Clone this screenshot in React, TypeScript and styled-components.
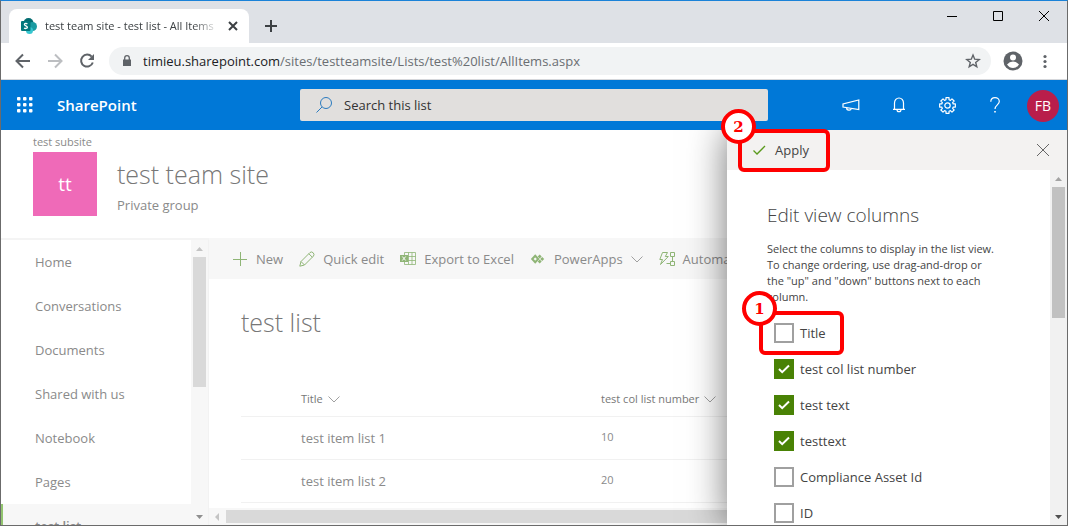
import React, { useState } from 'react';
import styled, { createGlobalStyle, css } from 'styled-components';

const GlobalStyle = createGlobalStyle`
  * { box-sizing: border-box; }
  body { margin: 0; font-family: "Open Sans", "Noto Sans", sans-serif; font-size: 13px; line-height: 20px; color: #333; }
  button { font: inherit; color: inherit; background: none; border: 0; padding: 0; cursor: pointer; }
  a { color: inherit; text-decoration: none; }
  svg { display: block; flex: none; }
`;

const Window = styled.div`
  display: flex;
  flex-direction: column;
  height: 100vh;
  overflow: hidden;
  background: #fff;
  border: 1px solid #6b6b6b;
  border-top-color: #1a82d8;
`;

/* Browser frame */
const TabStrip = styled.div`
  display: flex;
  align-items: flex-start;
  justify-content: space-between;
  flex: none;
  height: 42px;
  background: #dee1e6;
`;
const Tabs = styled.div`
  display: flex;
  align-items: flex-end;
  height: 42px;
  padding-left: 8px;
`;
const Tab = styled.div`
  display: flex;
  align-items: center;
  gap: 8px;
  width: 240px;
  height: 34px;
  padding: 0 10px 0 12px;
  background: #fff;
  border-radius: 8px 8px 0 0;
`;
const TabTitle = styled.span`
  flex: 1;
  overflow: hidden;
  white-space: nowrap;
  font-size: 11px;
  color: #3c4043;
  mask-image: linear-gradient(to right, #000 85%, transparent);
`;
const IconButton = styled.button<{ $w: number; $h: number; $color?: string }>`
  display: flex;
  align-items: center;
  justify-content: center;
  flex: none;
  width: ${p => p.$w}px;
  height: ${p => p.$h}px;
  color: ${p => p.$color ?? '#3c4043'};
`;
const WindowControls = styled.div`
  display: flex;
`;
const AddressBar = styled.div`
  display: flex;
  align-items: center;
  flex: none;
  height: 37px;
  padding: 0 6px;
  border-bottom: 1px solid #d5d7db;
`;
const UrlBox = styled.div`
  display: flex;
  align-items: center;
  gap: 12px;
  flex: 1;
  height: 28px;
  margin: 0 6px;
  padding: 0 2px 0 14px;
  background: #f1f3f4;
  border-radius: 14px;
`;
const Url = styled.a`
  flex: 1;
  overflow: hidden;
  white-space: nowrap;
  font-size: 13px;
  color: #6a6e72;
  b { font-weight: 400; color: #202124; }
`;

/* Suite bar */
const SuiteBar = styled.header`
  display: grid;
  grid-template-columns: 1fr minmax(0, 468px) 1fr;
  align-items: center;
  flex: none;
  height: 50px;
  background: #0078d7;
  color: #fff;
`;
const Brand = styled.div`
  display: flex;
  align-items: center;
  gap: 8px;
`;
const BrandName = styled.a`
  font-size: 15px;
  font-weight: 600;
`;
const SearchBox = styled.label`
  display: flex;
  align-items: center;
  gap: 12px;
  height: 32px;
  padding-left: 16px;
  background: #e1dfdd;
  border-radius: 2px;
  color: #2b7bbf;
`;
const SearchInput = styled.input`
  flex: 1;
  min-width: 0;
  padding: 0;
  border: 0;
  outline: 0;
  background: none;
  font: inherit;
  color: #333;
  &::placeholder { color: #333; opacity: 1; }
`;
const SuiteActions = styled.div`
  display: flex;
  justify-content: flex-end;
`;
const Avatar = styled.span`
  display: flex;
  align-items: center;
  justify-content: center;
  width: 32px;
  height: 32px;
  margin-top: 2px;
  border-radius: 50%;
  background: #b91e4b;
  color: #fff;
  font-size: 14px;
`;

/* Page */
const Page = styled.div`
  position: relative;
  display: flex;
  flex-direction: column;
  flex: 1;
  min-height: 0;
  color: #8a8a8a;
`;
const SiteHeader = styled.div`
  flex: none;
  height: 108px;
  padding: 4px 32px 0;
`;
const Crumb = styled.a`
  display: block;
  font-size: 11px;
  line-height: 16px;
`;
const SiteIdentity = styled.div`
  display: flex;
  gap: 20px;
  padding-top: 2px;
`;
const SiteLogo = styled.div`
  display: flex;
  align-items: center;
  justify-content: center;
  width: 64px;
  height: 64px;
  background: #ef6ab8;
  color: #fff;
  font-size: 19px;
`;
const SiteName = styled.h1`
  margin: 6px 0 5px;
  font-size: 25px;
  line-height: 32px;
  font-weight: 300;
  color: #777;
`;
const SiteType = styled.div`
  line-height: 20px;
`;
const Columns = styled.div`
  display: flex;
  flex: 1;
  min-height: 0;
`;
const Side = styled.div`
  display: flex;
  flex: none;
  width: 208px;
  border-top: 2px solid #f4f4f4;
  border-right: 1px solid #f2f2f2;
`;
const Nav = styled.nav`
  flex: 1;
  overflow: hidden;
`;
const NavLink = styled.a<{ $selected?: boolean }>`
  display: block;
  height: 44px;
  padding-left: 34px;
  line-height: 44px;
  ${p => p.$selected && css`
    padding-left: 32px;
    border-left: 2px solid #92c46f;
    background: #f7f7f7;
    font-weight: 600;
  `}
`;
const Track = styled.div<{ $vertical?: boolean; $bg: string }>`
  display: flex;
  flex: none;
  flex-direction: ${p => (p.$vertical ? 'column' : 'row')};
  ${p => (p.$vertical ? 'width: 17px;' : 'height: 17px;')}
  background: ${p => p.$bg};
`;
const TrackArrow = styled.span<{ $color: string }>`
  display: flex;
  align-items: center;
  justify-content: center;
  width: 17px;
  height: 17px;
  color: ${p => p.$color};
`;
const Thumb = styled.span<{ $length?: number; $color: string }>`
  ${p => (p.$length ? `flex: none; height: ${p.$length}px; margin: 0 2px;` : 'flex: 1; margin: 2px 0;')}
  background: ${p => p.$color};
`;
const TrackSpace = styled.span`
  flex: 1;
`;
const Main = styled.main`
  display: flex;
  flex-direction: column;
  flex: 1;
  min-width: 0;
`;
const CommandBar = styled.div`
  display: flex;
  gap: 16px;
  flex: none;
  height: 41px;
  padding: 0 23px;
  overflow: hidden;
  background: #f7f7f7;
`;
const Command = styled.button`
  display: flex;
  align-items: center;
  gap: 8px;
  flex: none;
  white-space: nowrap;
`;
const ListArea = styled.div`
  flex: 1;
  min-height: 0;
  overflow: hidden;
  padding: 25px 0 0 32px;
`;
const ListTitle = styled.h2`
  margin: 0 0 42px;
  font-size: 25px;
  line-height: 36px;
  font-weight: 300;
  color: #777;
`;
const Table = styled.table`
  width: 100%;
  border-collapse: collapse;
  table-layout: fixed;
  text-align: left;
  th, td { padding: 0; border-bottom: 1px solid #f1f1f1; }
  th { height: 34px; font-weight: 400; font-size: 11px; }
  td { height: 43px; }
  th:first-child { width: 60px; }
  th:nth-child(2) { width: 300px; }
`;
const HeadCell = styled.span`
  display: flex;
  align-items: center;
  gap: 5px;
  color: #777;
`;
const NumberText = styled.span`
  display: block;
  padding-bottom: 2px;
  font-size: 11px;
`;

/* Panel */
const Panel = styled.aside`
  position: absolute;
  top: 0;
  right: 0;
  bottom: 0;
  display: flex;
  flex-direction: column;
  width: 340px;
  background: #fff;
  box-shadow: 0 0 36px rgba(0, 0, 0, 0.55);
  clip-path: inset(0 0 0 -60px);
  color: #444;
`;
const PanelBar = styled.div`
  display: flex;
  align-items: center;
  justify-content: space-between;
  flex: none;
  height: 40px;
  padding-left: 25px;
  background: #f3f2f1;
`;
const ApplyButton = styled.button`
  display: flex;
  align-items: center;
  gap: 7px;
`;
const PanelBody = styled.div`
  display: flex;
  flex: 1;
  min-height: 0;
`;
const PanelContent = styled.div`
  flex: 1;
  overflow: hidden;
  padding: 31px 40px 0;
`;
const PanelTitle = styled.h2`
  margin: 0 0 12px;
  font-size: 19px;
  line-height: 28px;
  font-weight: 300;
`;
const PanelText = styled.p`
  margin: 0 0 10px;
  font-size: 11px;
  line-height: 16px;
  white-space: pre-line;
`;
const CheckRow = styled.label`
  display: flex;
  align-items: center;
  gap: 6px;
  height: 36px;
  padding-left: 7px;
`;
const CheckBoxCell = styled.span`
  display: grid;
  place-items: center;
  width: 20px;
  height: 20px;
  color: #fff;
  > * { grid-area: 1 / 1; }
  > svg { z-index: 1; pointer-events: none; }
`;
const CheckInput = styled.input`
  appearance: none;
  width: 20px;
  height: 20px;
  margin: 0;
  border: 2px solid #a0a0a0;
  background: #fff;
  &:checked { border-color: #498205; background: #498205; }
`;

/* Numbered callouts drawn over the page */
const Callout = styled.div<{ $x: number; $y: number; $w: number; $h: number }>`
  position: absolute;
  right: ${p => p.$x}px;
  top: ${p => p.$y}px;
  width: ${p => p.$w}px;
  height: ${p => p.$h}px;
  border: 4px solid #f00;
  border-radius: 6px;
  pointer-events: none;
`;
const CalloutNumber = styled.span`
  position: absolute;
  left: -21px;
  top: -24px;
  display: flex;
  align-items: center;
  justify-content: center;
  width: 35px;
  height: 35px;
  border: 4px solid #f00;
  border-radius: 50%;
  background: #fff;
  color: #f00;
  font-family: "DejaVu Serif", serif;
  font-weight: 700;
  font-size: 15px;
`;

type IconProps = { w?: number; h?: number; sw?: number; color?: string; children: React.ReactNode };
const Icon = ({ w = 16, h = 16, sw = 1, color = 'currentColor', children }: IconProps) => (
  <svg width={w} height={h} viewBox={`0 0 ${w} ${h}`} fill="none" stroke={color} strokeWidth={sw} aria-hidden="true">
    {children}
  </svg>
);

const Chevron = () => <Icon w={12} h={8} color="#a0a0a0"><path d="M.5 1.5 6 7l5.5-5.5" /></Icon>;

const arrows = { up: 'M1 5 4.500 1 8 5Z', down: 'M1 1 4.500 5 8 1Z', left: 'M6 0 2 4 6 8Z' };
const Arrow = ({ dir, color }: { dir: keyof typeof arrows; color: string }) => (
  <TrackArrow $color={color}>
    <svg width="9" height={dir === 'left' ? 8 : 6} viewBox={dir === 'left' ? '0 0 9 8' : '0 0 9 6'} aria-hidden="true">
      <path d={arrows[dir]} fill="currentColor" />
    </svg>
  </TrackArrow>
);

const SharePointLogo = () => (
  <svg width="16" height="16" viewBox="0 0 16 16" aria-hidden="true">
    <circle cx="7.500" cy="5" r="5" fill="#036c70" />
    <circle cx="11.500" cy="8.500" r="4.500" fill="#1a9ba1" />
    <circle cx="8.500" cy="12.500" r="3.500" fill="#37c6d0" />
    <rect y="3" width="9.500" height="10" rx="1" fill="#03787c" />
    <path d="M6.400 5.900C5.500 5.200 3.400 5.200 3.400 6.600 3.400 8.100 6.400 7.700 6.400 9.300 6.400 10.800 4 10.700 3.100 10" fill="none" stroke="#fff" strokeWidth="1.300" />
  </svg>
);

const gear = Array.from({ length: 8 }, (_, i) => {
  const at = (deg: number, r: number) => {
    const a = ((i * 45 + deg) * Math.PI) / 180;
    return `${(8.5 + r * Math.cos(a)).toFixed(2)} ${(8.5 + r * Math.sin(a)).toFixed(2)}`;
  };
  return `${i ? 'L' : 'M'}${at(-11, 8)}L${at(11, 8)}L${at(15, 5.9)}L${at(30, 5.9)}`;
}).join('') + 'Z';

const navItems = ['Home', 'Conversations', 'Documents', 'Shared with us', 'Notebook', 'Pages', 'test list'];
const rows = [['test item list 1', '10'], ['test item list 2', '20']];
const green = '#8fb576';

const commands = [
  { text: 'New', icon: <Icon color={green}><path d="M8.500 1v14M1 8.500h14" /></Icon> },
  { text: 'Quick edit', icon: <Icon color={green}><path d="M.8 15.200 2 10.500 11 1.500Q12.700.200 14.200 1.800 15.700 3.300 14.500 5L5.500 14Z M9.800 2.700l3.500 3.500 M2 10.500 5.500 14" /></Icon> },
  { text: 'Export to Excel', icon: (
    <Icon color={green}>
      <path d="M4.500 4V1.500h11v12h-11V11 M8 5.500h7.500 M8 9.500h7.500 M8.500 1.500v12 M12 1.500v12" strokeOpacity=".8" />
      <path d="M0 4h8v7H0Z" fill={green} stroke="none" />
      <path d="M2.300 5.500 5.700 9.500M5.700 5.500 2.300 9.500" stroke="#fff" />
    </Icon>
  ) },
  { text: 'PowerApps', chevron: true, icon: (
    <Icon color={green}>
      <path d="M5.200 4.800 8.200 8l-3 3.200-3-3.200Z" strokeWidth="2" />
      <path d="M9.700 3.500 11.700 5.500 9.700 7.500 7.700 5.500ZM12.200 6 14.200 8 12.200 10 10.200 8ZM9.700 8.500 11.700 10.500 9.700 12.500 7.700 10.500Z" fill={green} stroke="none" />
    </Icon>
  ) },
  { text: 'Automate', chevron: true, icon: (
    <Icon color={green}>
      <path d="M3.500 1.500h5L6.300 5.500h3L1.500 13.500 3.500 8.500H.8Z M11.500 1.500h4v4h-4Z M11.500 10.500h4v4h-4Z M13.500 5.500v5 M11.500 12.500H7.500" />
    </Icon>
  ) },
];

const columns = [
  { name: 'Title', on: false },
  { name: 'test col list number', on: true },
  { name: 'test text', on: true },
  { name: 'testtext', on: true },
  { name: 'Compliance Asset Id', on: false },
  { name: 'ID', on: false },
];

export default function App() {
  const [shown, setShown] = useState(columns.map(c => c.on));
  const toggle = (i: number) => setShown(s => s.map((v, j) => (j === i ? !v : v)));

  return (
    <Window>
      <GlobalStyle />
      <TabStrip>
        <Tabs>
          <Tab>
            <SharePointLogo />
            <TabTitle>test team site - test list - All Items</TabTitle>
            <IconButton $w={12} $h={16} aria-label="Close tab"><Icon w={10} h={10} sw={2}><path d="m1 1 8 8M9 1 1 9" /></Icon></IconButton>
          </Tab>
          <IconButton $w={44} $h={34} aria-label="New tab"><Icon w={12} h={12} sw={2}><path d="M6 0v12M0 6h12" /></Icon></IconButton>
        </Tabs>
        <WindowControls>
          <IconButton $w={46} $h={29} $color="#000" aria-label="Minimize"><Icon w={10} h={10}><path d="M0 5.500h10" /></Icon></IconButton>
          <IconButton $w={46} $h={29} $color="#000" aria-label="Maximize"><Icon w={10} h={10}><path d="M.5.500h9v9h-9Z" /></Icon></IconButton>
          <IconButton $w={46} $h={29} $color="#000" aria-label="Close"><Icon w={10} h={10}><path d="m0 0 10 10M10 0 0 10" /></Icon></IconButton>
        </WindowControls>
      </TabStrip>
      <AddressBar>
        <IconButton $w={32} $h={32} $color="#5f6368" aria-label="Back"><Icon sw={2}><path d="M15 8H2.500M8 1.500 1.500 8 8 14.500" /></Icon></IconButton>
        <IconButton $w={32} $h={32} $color="#bcbec1" aria-label="Forward"><Icon sw={2}><path d="M1 8h12.500M8 1.500 14.500 8 8 14.500" /></Icon></IconButton>
        <IconButton $w={32} $h={32} $color="#5f6368" aria-label="Reload">
          <Icon sw={2}><path d="M12.700 3.700A6 6 0 1 0 13.800 9.500" /><path d="M15 1v6H9Z" fill="currentColor" stroke="none" /></Icon>
        </IconButton>
        <UrlBox>
          <Icon w={8} h={12} color="#5f6368"><path d="M0 4.500h8V11H0Z" fill="#5f6368" stroke="none" /><path d="M1.700 5V3a2.300 2.300 0 0 1 4.600 0v2" strokeWidth="1.300" /></Icon>
          <Url href="#"><b>timieu.sharepoint.com</b>/sites/testteamsite/Lists/test%20list/AllItems.aspx</Url>
          <IconButton $w={32} $h={28} $color="#5f6368" aria-label="Bookmark">
            <Icon sw={1.4}><path d="m8 2 1.700 4.200 4.500.300-3.500 2.900 1.100 4.400L8 11.400l-3.800 2.400 1.100-4.400L1.800 6.500l4.500-.300Z" /></Icon>
          </IconButton>
        </UrlBox>
        <IconButton $w={32} $h={32} $color="#5f6368" aria-label="Profile">
          <svg width="20" height="20" viewBox="0 0 20 20" aria-hidden="true">
            <circle cx="10" cy="10" r="9.500" fill="#5f6368" />
            <circle cx="10" cy="6.500" r="3" fill="#fff" />
            <path d="M4 13.500Q6.500 10.500 10 10.500T16 13.500Q13.500 17 10 17T4 13.500Z" fill="#fff" />
          </svg>
        </IconButton>
        <IconButton $w={32} $h={32} $color="#5f6368" aria-label="Menu">
          <Icon><g fill="currentColor" stroke="none"><circle cx="8" cy="3.500" r="1.600" /><circle cx="8" cy="8.500" r="1.600" /><circle cx="8" cy="13.500" r="1.600" /></g></Icon>
        </IconButton>
      </AddressBar>

      <SuiteBar>
        <Brand>
          <IconButton $w={48} $h={50} $color="#fff" aria-label="App launcher">
            <Icon>
              <g fill="currentColor" stroke="none">
                {[0, 6, 12].map(y => [0, 6, 12].map(x => <rect key={`${x}-${y}`} x={x} y={y} width="3.500" height="3.500" rx="1" />))}
              </g>
            </Icon>
          </IconButton>
          <BrandName href="#">SharePoint</BrandName>
        </Brand>
        <SearchBox>
          <Icon><circle cx="10" cy="6" r="5.500" /><path d="M6 10 .5 15.500" /></Icon>
          <SearchInput type="text" placeholder="Search this list" aria-label="Search this list" />
        </SearchBox>
        <SuiteActions>
          <IconButton $w={48} $h={50} $color="#fff" aria-label="News">
            <Icon w={18} h={12} sw={1.2}><path d="M16.800 1v9.500L1 8V5Z M4.500 8.700C4.500 11.800 9 12 9.300 9.400" /></Icon>
          </IconButton>
          <IconButton $w={48} $h={50} $color="#fff" aria-label="Notifications">
            <Icon w={14} h={16} sw={1.2}><path d="M1 12.400h12 M2.500 12.400V6a4.500 5 0 0 1 9 0v6.400 M5 12.400a2 2.300 0 0 0 4 0" /></Icon>
          </IconButton>
          <IconButton $w={48} $h={50} $color="#fff" aria-label="Settings">
            <Icon w={17} h={17} sw={1.2}><path d={gear} strokeLinejoin="round" /><circle cx="8.500" cy="8.500" r="2.700" /></Icon>
          </IconButton>
          <IconButton $w={48} $h={50} $color="#fff" aria-label="Help">
            <Icon w={10} h={16} sw={1.2}><path d="M.8 4.800C.8 2.200 2.500.700 5 .7s4.300 1.600 4.300 3.900C9.300 7.800 5 8 5 12" /><path d="M4.200 14h1.600v1.600H4.200Z" fill="currentColor" stroke="none" /></Icon>
          </IconButton>
          <IconButton $w={48} $h={50} aria-label="Account"><Avatar>FB</Avatar></IconButton>
        </SuiteActions>
      </SuiteBar>

      <Page>
        <SiteHeader>
          <Crumb href="#">test subsite</Crumb>
          <SiteIdentity>
            <SiteLogo>tt</SiteLogo>
            <div>
              <SiteName>test team site</SiteName>
              <SiteType>Private group</SiteType>
            </div>
          </SiteIdentity>
        </SiteHeader>
        <Columns>
          <Side>
            <Nav>
              {navItems.map(n => <NavLink key={n} href="#" $selected={n === 'test list'}>{n}</NavLink>)}
            </Nav>
            <Track $vertical $bg="#f7f7f7">
              <Arrow dir="up" color="#c4c4c4" />
              <Thumb $length={130} $color="#d9d9d9" />
              <TrackSpace />
              <Arrow dir="down" color="#8f8f8f" />
            </Track>
          </Side>
          <Main>
            <CommandBar>
              {commands.map(c => (
                <Command key={c.text}>{c.icon}<span>{c.text}</span>{c.chevron && <Chevron />}</Command>
              ))}
            </CommandBar>
            <ListArea>
              <ListTitle>test list</ListTitle>
              <Table>
                <thead>
                  <tr>
                    <th aria-label="Select" />
                    <th><HeadCell>Title <Chevron /></HeadCell></th>
                    <th><HeadCell>test col list number <Chevron /></HeadCell></th>
                  </tr>
                </thead>
                <tbody>
                  {rows.map(([title, num]) => (
                    <tr key={title}><td /><td>{title}</td><td><NumberText>{num}</NumberText></td></tr>
                  ))}
                </tbody>
              </Table>
            </ListArea>
            <Track $bg="#f7f7f7">
              <Arrow dir="left" color="#c4c4c4" />
              <Thumb $color="#d9d9d9" />
            </Track>
          </Main>
        </Columns>

        <Panel>
          <PanelBar>
            <ApplyButton>
              <Icon color="#5a9a1c" sw={1.3}><path d="m1.500 8.500 3.500 3.500 8-8" /></Icon>
              Apply
            </ApplyButton>
            <IconButton $w={48} $h={40} $color="#666" aria-label="Close panel"><Icon w={12} h={12}><path d="m0 0 12 12M12 0 0 12" /></Icon></IconButton>
          </PanelBar>
          <PanelBody>
            <PanelContent>
              <PanelTitle>Edit view columns</PanelTitle>
              <PanelText>{'Select the columns to display in the list view.\nTo change ordering, use drag-and-drop or\nthe "up" and "down" buttons next to each\ncolumn.'}</PanelText>
              {columns.map((c, i) => (
                <CheckRow key={c.name}>
                  <CheckBoxCell>
                    <CheckInput type="checkbox" checked={shown[i]} onChange={() => toggle(i)} />
                    {shown[i] && <Icon w={12} h={10} sw={2}><path d="m1 5 3.200 3.200L11 1.500" /></Icon>}
                  </CheckBoxCell>
                  {c.name}
                </CheckRow>
              ))}
            </PanelContent>
            <Track $vertical $bg="#f1f1f1">
              <Arrow dir="up" color="#a3a3a3" />
              <Thumb $length={131} $color="#c1c1c1" />
              <TrackSpace />
              <Arrow dir="down" color="#505050" />
            </Track>
          </PanelBody>
        </Panel>
        <Callout $x={237} $y={-1} $w={92} $h={43}><CalloutNumber>2</CalloutNumber></Callout>
        <Callout $x={223} $y={181} $w={85} $h={44}><CalloutNumber>1</CalloutNumber></Callout>
      </Page>
    </Window>
  );
}
